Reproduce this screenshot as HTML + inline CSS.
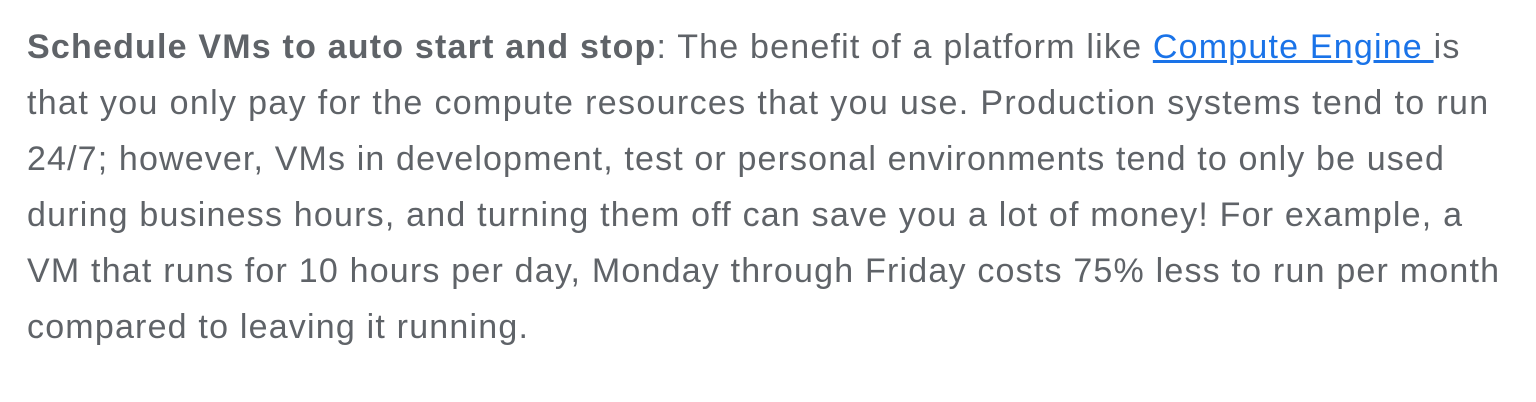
<!DOCTYPE html>
<html><head><meta charset="utf-8"><style>
html,body{margin:0;padding:0;background:#fff;width:1536px;height:402px;overflow:hidden}
p{margin:0;position:absolute;left:27px;top:19px;font-family:"Liberation Sans",sans-serif;font-size:34px;letter-spacing:1.2px;line-height:56px;color:#5f6368;white-space:nowrap}
b{color:#5f6368}
a{color:#1a73e8;text-decoration:underline}
.l{display:block}
</style></head><body>
<p>
<span class="l"><b>Schedule VMs to auto start and stop</b>: The benefit of a platform like <a>Compute Engine </a>is</span>
<span class="l" style="letter-spacing:1.35px">that you only pay for the compute resources that you use. Production systems tend to run</span>
<span class="l" style="letter-spacing:1.14px">24/7; however, VMs in development, test or personal environments tend to only be used</span>
<span class="l">during business hours, and turning them off can save you a lot of money! For example, a</span>
<span class="l">VM that runs for 10 hours per day, Monday through Friday costs 75% less to run per month</span>
<span class="l">compared to leaving it running.</span>
</p>
</body></html>
